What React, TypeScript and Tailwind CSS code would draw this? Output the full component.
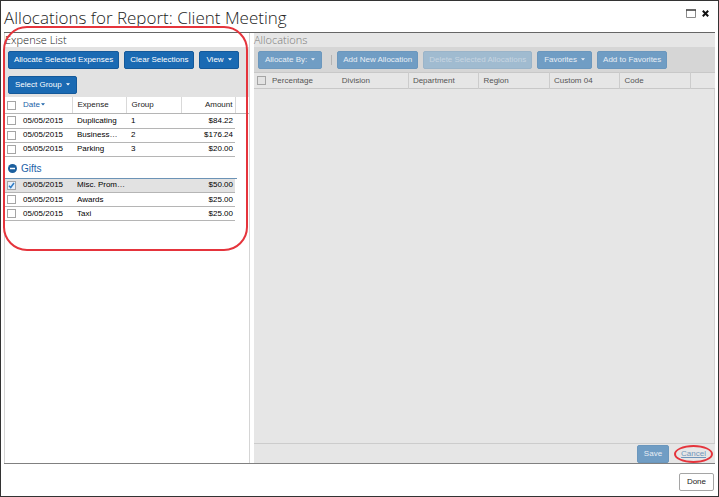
import type { ReactNode } from "react";

type Expense = { date: string; name: string; group?: string; amount: string; checked?: boolean };

const ungrouped: Expense[] = [
  { date: "05/05/2015", name: "Duplicating", group: "1", amount: "$84.22" },
  { date: "05/05/2015", name: "Business…", group: "2", amount: "$176.24" },
  { date: "05/05/2015", name: "Parking", group: "3", amount: "$20.00" },
];

const gifts: Expense[] = [
  { date: "05/05/2015", name: "Misc. Prom…", amount: "$50.00", checked: true },
  { date: "05/05/2015", name: "Awards", amount: "$25.00" },
  { date: "05/05/2015", name: "Taxi", amount: "$25.00" },
];

const allocationColumns = ["Division", "Department", "Region", "Custom 04", "Code"];

function Caret() {
  return (
    <svg viewBox="0 0 4 3" className="ml-1 inline-block h-[3px] w-1 align-middle" fill="currentColor" aria-hidden="true">
      <path d="M0 .2h4L2 2.6z" />
    </svg>
  );
}

function ToolButton({ children, muted, disabled, caret }: { children: ReactNode; muted?: boolean; disabled?: boolean; caret?: boolean }) {
  const tone = disabled
    ? "border-[#9ab4c9] bg-[#a0bbd0] text-[#c7d5e1]"
    : muted
      ? "border-[#6b97bd] bg-[#709dc4] text-[#e8eef4]"
      : "border-[#14599a] bg-[#1a6ab3] text-white";
  return (
    <button type="button" disabled={disabled} className={`h-[18px] shrink-0 rounded-xs border whitespace-nowrap ${caret ? "px-[6px]" : "px-[5px]"} ${tone}`}>
      {children}
      {caret && <Caret />}
    </button>
  );
}

function Check({ label, checked, muted }: { label: string; checked?: boolean; muted?: boolean }) {
  return (
    <span className="relative block size-[9px]">
      <input
        type="checkbox"
        aria-label={label}
        defaultChecked={checked}
        className={`peer block size-[9px] appearance-none border checked:bg-[#e6f1fb] ${muted ? "border-[#a5a5a5] bg-[#e3e3e3]" : "border-[#a5a5a5] bg-white"}`}
      />
      <svg viewBox="0 0 9 9" className="pointer-events-none absolute inset-0 hidden size-[9px] peer-checked:block" fill="none" stroke="#2f7cc4" strokeWidth="1.5" aria-hidden="true">
        <path d="M2 4.7l1.7 1.8L7 2" />
      </svg>
    </span>
  );
}

function ExpenseColumns() {
  return (
    <colgroup>
      <col className="w-[17px]" />
      <col className="w-[50px]" />
      <col className="w-[54px]" />
      <col className="w-[55px]" />
      <col className="w-[54px]" />
    </colgroup>
  );
}

function ExpenseRows({ rows, label }: { rows: Expense[]; label: string }) {
  return (
    <table aria-label={label} className="w-[230px] table-fixed border-collapse text-black">
      <ExpenseColumns />
      <tbody>
        {rows.map((row) => (
          <tr key={row.name} className={`h-[14px] border-b border-[#b5b5b5] ${row.checked ? "bg-[#e2e2e2]" : ""}`}>
            <td className="p-0 pl-[2px]">
              <Check label={`Select ${row.name}`} checked={row.checked} />
            </td>
            <td className="p-0 pl-px">{row.date}</td>
            <td className="p-0 pl-[5px] whitespace-nowrap">{row.name}</td>
            <td className="p-0 pl-[5px]">{row.group}</td>
            <td className="p-0 pr-[2px] text-right">{row.amount}</td>
          </tr>
        ))}
      </tbody>
    </table>
  );
}

export default function App() {
  return (
    <div className="relative flex min-h-screen flex-col border border-[#333333] bg-white px-[3px] font-['Liberation_Sans',Arial,sans-serif] text-[8px] leading-[12px]">
      <header className="flex h-8 items-center justify-between border-b border-[#666666] pr-[6px]">
        <h1 className="pt-[2px] font-['Open_Sans',sans-serif] text-[17px] leading-6 font-light text-[#222222]">
          Allocations for Report: Client Meeting
        </h1>
        <div className="mb-[6px] flex items-center gap-[6px]">
          <button type="button" aria-label="Maximize" className="block">
            <svg viewBox="0 0 10 9" className="h-[9px] w-[10px]" fill="none" aria-hidden="true">
              <path d="M.5 1v7.5h9V1" stroke="#8a8a8a" />
              <path d="M0 1h10" stroke="#444" strokeWidth="1.6" />
            </svg>
          </button>
          <button type="button" aria-label="Close" className="block">
            <svg viewBox="0 0 7 7" className="size-[7px]" stroke="#111" strokeWidth="2" aria-hidden="true">
              <path d="M.8.8l5.4 5.4M6.2.8L.8 6.2" />
            </svg>
          </button>
        </div>
      </header>

      <main className="flex grow gap-1 border-b border-[#808080]">
        <section className="flex w-[246px] shrink-0 flex-col border-x border-[#d5d5d5]">
          <h2 className="h-[14px] font-['Open_Sans',sans-serif] text-[11px] leading-[14px] font-light text-[#222222]">Expense List</h2>
          <div className="flex flex-wrap gap-x-[5px] gap-y-[7px] bg-[#e2e2e2] px-[3px] pt-1 pb-[3px]">
            <ToolButton>Allocate Selected Expenses</ToolButton>
            <ToolButton>Clear Selections</ToolButton>
            <ToolButton caret>View</ToolButton>
            <ToolButton caret>Select Group</ToolButton>
          </div>
          <div className="border-b border-[#b5b5b5]">
            <table className="w-[230px] table-fixed border-collapse text-left text-[#222222]">
              <ExpenseColumns />
              <thead>
                <tr className="h-4">
                  <th className="p-0 pl-[2px]"><Check label="Select all expenses" /></th>
                  <th className="border-r border-[#d9d9d9] p-0 pl-px font-normal text-[#1b62a8]">Date<svg viewBox="0 0 4 3" className="ml-px inline-block h-[3px] w-1 align-middle" fill="currentColor" aria-hidden="true"><path d="M0 .2h4L2 2.6z" /></svg></th>
                  <th className="border-r border-[#d9d9d9] p-0 pl-[5px] font-normal">Expense</th>
                  <th className="border-r border-[#d9d9d9] p-0 pl-[5px] font-normal">Group</th>
                  <th className="border-r border-[#d9d9d9] p-0 pr-[2px] text-right font-normal">Amount</th>
                </tr>
              </thead>
            </table>
          </div>
          <ExpenseRows rows={ungrouped} label="Ungrouped expenses" />
          <div className="flex h-[22px] w-[232px] items-end border-b border-[#6c93b6] pb-[2px] pl-[3px]">
            <button type="button" className="flex items-center gap-1 text-[10px] leading-[14px] text-[#1b62a8]">
              <svg viewBox="0 0 9 9" className="size-[9px]" aria-hidden="true">
                <circle cx="4.5" cy="4.5" r="4.5" fill="#1b5f9e" />
                <path d="M2 4.5h5" stroke="white" strokeWidth="1.5" />
              </svg>
              Gifts
            </button>
          </div>
          <ExpenseRows rows={gifts} label="Gifts" />
        </section>

        <section className="flex min-w-0 grow flex-col bg-[#e6e6e6]">
          <h2 className="h-[14px] font-['Open_Sans',sans-serif] text-[11px] leading-[14px] font-light text-[#777777]">Allocations</h2>
          <div className="flex items-start gap-[5px] bg-[#d6d6d6] px-1 pt-1 pb-[3px]">
            <ToolButton muted caret>Allocate By:</ToolButton>
            <span className="ml-1 h-[10px] w-px self-center bg-[#b4b4b4]" />
            <ToolButton muted>Add New Allocation</ToolButton>
            <ToolButton disabled>Delete Selected Allocations</ToolButton>
            <ToolButton muted caret>Favorites</ToolButton>
            <ToolButton muted>Add to Favorites</ToolButton>
          </div>
          <table className="w-full table-fixed border-collapse text-left text-[#555555]">
            <colgroup>
              <col className="w-[17px]" />
              <col className="w-[14.5%]" />
              <col className="w-[15.3%]" />
              <col className="w-[15.3%]" />
              <col className="w-[15.3%]" />
              <col className="w-[15.3%]" />
              <col className="w-[15.3%]" />
              <col />
            </colgroup>
            <thead>
              <tr className="h-4 border-y border-[#c8c8c8]">
                <th className="p-0 pl-[3px]"><Check label="Select all allocations" muted /></th>
                <th className="p-0 pl-px font-normal">Percentage</th>
                {allocationColumns.map((column) => (
                  <th key={column} className="border-r border-[#cccccc] p-0 pl-1 font-normal">
                    {column}
                  </th>
                ))}
                <th className="p-0" />
              </tr>
            </thead>
          </table>
          <div className="grow border-r border-[#d2d2d2]" />
          <footer className="flex h-5 items-center justify-end gap-3 border-t border-[#cccccc] pr-[9px]">
            <ToolButton muted><span className="px-px">Save</span></ToolButton>
            <span className="relative">
              <a href="#cancel" className="text-[#6f95ba] underline">Cancel</a>
              <span className="pointer-events-none absolute -inset-x-[7px] -inset-y-[3px] rounded-[50%] border-2 border-[#e5343c]" />
            </span>
          </footer>
        </section>
      </main>

      <div className="flex h-8 items-end justify-end pr-px pb-[5px]">
        <button type="button" className="h-[18px] rounded-xs border border-[#a5a5a5] bg-white px-[7px] text-[#222222]">Done</button>
      </div>

      <div className="pointer-events-none absolute top-[25px] left-[2px] h-[225px] w-[245px] rounded-3xl border-2 border-[#e5343c]" />
    </div>
  );
}
